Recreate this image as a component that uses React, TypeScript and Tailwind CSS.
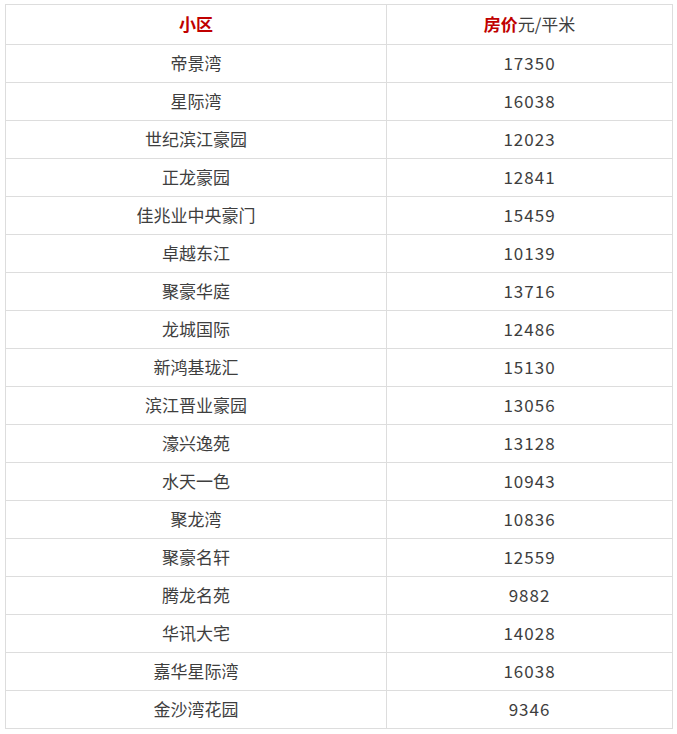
import React from "react";

const rows: [string, string][] = [
  ["帝景湾", "17350"],
  ["星际湾", "16038"],
  ["世纪滨江豪园", "12023"],
  ["正龙豪园", "12841"],
  ["佳兆业中央豪门", "15459"],
  ["卓越东江", "10139"],
  ["聚豪华庭", "13716"],
  ["龙城国际", "12486"],
  ["新鸿基珑汇", "15130"],
  ["滨江晋业豪园", "13056"],
  ["濠兴逸苑", "13128"],
  ["水天一色", "10943"],
  ["聚龙湾", "10836"],
  ["聚豪名轩", "12559"],
  ["腾龙名苑", "9882"],
  ["华讯大宅", "14028"],
  ["嘉华星际湾", "16038"],
  ["金沙湾花园", "9346"],
];

export default function App() {
  return (
    <div
      className="w-[677px] h-[734px] bg-white pt-[4px] pl-[5px] text-[#3e3e3e] text-[17px]"
      style={{ fontFamily: '"Noto Sans CJK SC", "Noto Sans", sans-serif' }}
    >
      <table className="w-[667px] border-collapse table-fixed">
        <colgroup>
          <col className="w-[381px]" />
          <col className="w-[286px]" />
        </colgroup>
        <thead>
          <tr className="h-[40px]">
            <th className="border border-[#dddddd] p-0 pb-[2px] text-center font-bold text-[#c00000]">
              小区
            </th>
            <th className="border border-[#dddddd] p-0 pb-[2px] text-center font-normal">
              <span className="font-bold text-[#c00000]">房价</span>元/平米
            </th>
          </tr>
        </thead>
        <tbody>
          {rows.map(([name, price]) => (
            <tr key={name} className="h-[38px]">
              <td className="border border-[#dddddd] p-0 pb-[2px] text-center">{name}</td>
              <td className="border border-[#dddddd] p-0 pb-[2px] text-center tracking-[1px]">
                {price}
              </td>
            </tr>
          ))}
        </tbody>
      </table>
    </div>
  );
}
